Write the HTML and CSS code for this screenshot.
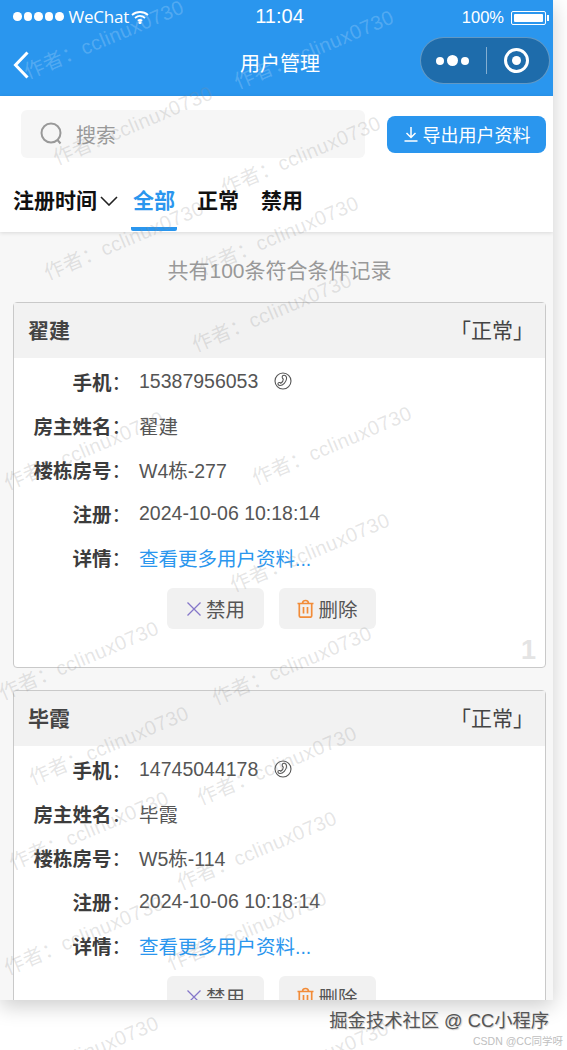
FILE: index.html
```html
<!DOCTYPE html>
<html lang="zh-CN">
<head>
    <meta charset="UTF-8">
    <meta name="viewport" content="width=device-width, initial-scale=1.0">
    <title>用户管理</title>
    <link rel="stylesheet" href="styles.css">
</head>
<body>
    <div class="phone">
        <header class="top">
            <div class="status">
                <div class="status-left">
                    <span class="signal"><i></i><i></i><i></i><i></i><i></i></span>
                    <span class="carrier">WeChat</span>
                    <svg class="wifi" width="18" height="14" viewBox="0 0 18 14" fill="none" stroke="#fff" stroke-width="1.8">
                        <path d="M1 5c4.500-4 11.500-4 16 0"/>
                        <path d="M4 8c3-2.500 7-2.500 10 0"/>
                        <path d="M6.800 10.800c1.300-1 3.100-1 4.400 0"/>
                        <circle cx="9" cy="12.500" r=".7" fill="#fff"/>
                    </svg>
                </div>
                <div class="status-time">11:04</div>
                <div class="status-right">
                    <span>100%</span>
                    <span class="battery"><b></b></span>
                </div>
            </div>
            <div class="nav">
                <svg class="back" width="16" height="28" viewBox="0 0 16 28" fill="none" stroke="#fff" stroke-width="3">
                    <path d="M14.500 1.500 2.500 14l12 12.500"/>
                </svg>
                <div class="nav-title">用户管理</div>
                <div class="capsule">
                    <span class="capsule-dots"><i></i><i class="big"></i><i></i></span>
                    <span class="capsule-line"></span>
                    <span class="capsule-target"><i></i></span>
                </div>
            </div>
        </header>

        <section class="tools">
            <div class="tools-row">
                <div class="search">
                    <svg width="24" height="24" viewBox="0 0 24 24" fill="none" stroke="#999" stroke-width="2">
                        <circle cx="11" cy="11" r="9.500"/>
                        <path d="m17.500 18 3 3.500"/>
                    </svg>
                    <span>搜索</span>
                </div>
                <button type="button" class="export">
                    <svg width="16" height="16" viewBox="0 0 16 16" fill="none" stroke="#fff" stroke-width="1.500">
                        <path d="M8 1v10M3.500 7 8 11.500 12.500 7M1.500 15h13"/>
                    </svg>
                    导出用户资料
                </button>
            </div>
            <div class="tabs">
                <div class="tab-sort">
                    注册时间
                    <svg width="18" height="10" viewBox="0 0 18 10" fill="none" stroke="#222" stroke-width="1.600">
                        <path d="m1 1 8 8 8-8"/>
                    </svg>
                </div>
                <div class="tab tab-on">全部</div>
                <div class="tab">正常</div>
                <div class="tab">禁用</div>
            </div>
        </section>

        <main class="list">
            <p class="count">共有100条符合条件记录</p>

            <article class="card">
                <div class="card-head">
                    <h2>翟建</h2>
                    <span class="state">「正常」</span>
                </div>
                <div class="row"><span class="label">手机<em>：</em></span><span class="value">15387956053</span>
                    <svg class="tel" width="18" height="18" viewBox="0 0 18 18" fill="none" stroke="#555" stroke-width="1.100">
                        <circle cx="9" cy="9" r="8"/>
                        <path d="M9 3.500c2.500-.8 4 1 3.500 3.500-.5 3-3.300 6.500-6.500 6.500-1.600 0-2.600-1.500-1.800-2.500.7-.8 2-.6 2.600.3 1.500-.8 2.500-2.600 2.500-4.300-1 0-1.700-2.800-.3-3.500z"/>
                    </svg>
                </div>
                <div class="row"><span class="label">房主姓名<em>：</em></span><span class="value">翟建</span></div>
                <div class="row"><span class="label">楼栋房号<em>：</em></span><span class="value">W4栋-277</span></div>
                <div class="row"><span class="label">注册<em>：</em></span><span class="value">2024-10-06 10:18:14</span></div>
                <div class="row"><span class="label">详情<em>：</em></span><span class="value link">查看更多用户资料...</span></div>
                <div class="actions">
                    <button type="button" class="act">
                        <svg width="16" height="16" viewBox="0 0 16 16" fill="none" stroke="#8577c9" stroke-width="1.300"><path d="m1.500 1.500 13 13M14.500 1.500l-13 13"/></svg>
                        禁用
                    </button>
                    <button type="button" class="act">
                        <svg width="17" height="19" viewBox="0 0 17 19" fill="none" stroke="#f28c38" stroke-width="1.700"><path d="M.5 4.500h16M5.500 4.500c0-4 6-4 6 0M2.300 4.500v12.200c0 1 .6 1.500 1.500 1.500h9.400c.9 0 1.500-.5 1.500-1.500V4.500M6.500 8v6.500M10.500 8v6.500"/></svg>
                        删除
                    </button>
                </div>
                <span class="num">1</span>
            </article>

            <article class="card">
                <div class="card-head">
                    <h2>毕霞</h2>
                    <span class="state">「正常」</span>
                </div>
                <div class="row"><span class="label">手机<em>：</em></span><span class="value">14745044178</span>
                    <svg class="tel" width="18" height="18" viewBox="0 0 18 18" fill="none" stroke="#555" stroke-width="1.100">
                        <circle cx="9" cy="9" r="8"/>
                        <path d="M9 3.500c2.500-.8 4 1 3.500 3.500-.5 3-3.300 6.500-6.500 6.500-1.600 0-2.600-1.500-1.800-2.500.7-.8 2-.6 2.600.3 1.500-.8 2.500-2.600 2.500-4.300-1 0-1.700-2.800-.3-3.500z"/>
                    </svg>
                </div>
                <div class="row"><span class="label">房主姓名<em>：</em></span><span class="value">毕霞</span></div>
                <div class="row"><span class="label">楼栋房号<em>：</em></span><span class="value">W5栋-114</span></div>
                <div class="row"><span class="label">注册<em>：</em></span><span class="value">2024-10-06 10:18:14</span></div>
                <div class="row"><span class="label">详情<em>：</em></span><span class="value link">查看更多用户资料...</span></div>
                <div class="actions">
                    <button type="button" class="act">
                        <svg width="16" height="16" viewBox="0 0 16 16" fill="none" stroke="#8577c9" stroke-width="1.300"><path d="m1.500 1.500 13 13M14.500 1.500l-13 13"/></svg>
                        禁用
                    </button>
                    <button type="button" class="act">
                        <svg width="17" height="19" viewBox="0 0 17 19" fill="none" stroke="#f28c38" stroke-width="1.700"><path d="M.5 4.500h16M5.500 4.500c0-4 6-4 6 0M2.300 4.500v12.200c0 1 .6 1.500 1.500 1.500h9.400c.9 0 1.500-.5 1.500-1.500V4.500M6.500 8v6.500M10.500 8v6.500"/></svg>
                        删除
                    </button>
                </div>
            </article>
        </main>
    </div>

    <footer class="credit">
        <div class="credit-main">掘金技术社区 @ CC小程序</div>
        <div class="credit-small">CSDN @CC同学呀</div>
    </footer>

    <!-- 水印 -->
    <div class="marks" aria-hidden="true">
        <span class="wm wm1">作者：cclinux0730</span>
        <span class="wm wm2">作者：cclinux0730</span>
        <span class="wm wm3">作者：cclinux0730</span>
        <span class="wm wm4">作者：cclinux0730</span>
        <span class="wm wm5">作者：cclinux0730</span>
        <span class="wm wm6">作者：cclinux0730</span>
        <span class="wm wm7">作者：cclinux0730</span>
        <span class="wm wm8">作者：cclinux0730</span>
        <span class="wm wm9">作者：cclinux0730</span>
        <span class="wm wm10">作者：cclinux0730</span>
        <span class="wm wm11">作者：cclinux0730</span>
        <span class="wm wm12">作者：cclinux0730</span>
        <span class="wm wm13">作者：cclinux0730</span>
        <span class="wm wm14">作者：cclinux0730</span>
        <span class="wm wm15">作者：cclinux0730</span>
        <span class="wm wm16">作者：cclinux0730</span>
        <span class="wm wm17">作者：cclinux0730</span>
        <span class="wm wm18">作者：cclinux0730</span>
        <span class="wm wm19">作者：cclinux0730</span>
        <span class="wm wm20">作者：cclinux0730</span>
    </div>
</body>
</html>
```
FILE: styles.css
```css
* {
    box-sizing: border-box;
    font-family: "Liberation Sans", "Noto Sans CJK SC", sans-serif;
}

html, body {
    margin: 0;
    height: 1050px;
    overflow: hidden;
    background-color: #fff;
}

body {
    position: relative;
}

button {
    border: 0;
    padding: 0;
    color: inherit;
}

.phone {
    width: 553px;
    height: 1000px;
    overflow: hidden;
    background-color: #f7f7f7;
    box-shadow: 0 6px 20px rgba(0, 0, 0, .2);
}

/* 顶部 */
.top {
    height: 96px;
    background-color: #2a96ee;
    color: #fff;
}

.status {
    display: flex;
    align-items: center;
    height: 33px;
    padding: 0 7px 0 13px;
}

.status-left, .status-right {
    flex: 1;
    display: flex;
    align-items: center;
}

.status-left {
    gap: 5px;
}

.status-right {
    justify-content: flex-end;
    gap: 7px;
    font-size: 16.500px;
    padding-top: 2px;
}

.status-time {
    font-size: 20px;
}

.signal {
    display: flex;
    gap: 2px;
}

.signal i {
    width: 8.500px;
    height: 8.500px;
    border-radius: 50%;
    background-color: #fff;
}

.carrier {
    font-family: "Open Sans", sans-serif;
    font-size: 17px;
    letter-spacing: -.2px;
}

.wifi {
    margin-left: -3px;
}

.battery {
    position: relative;
    width: 35px;
    height: 14px;
    padding: 2px;
    border: 1px solid #fff;
    border-radius: 2px;
}

.battery b {
    display: block;
    height: 100%;
    background-color: #fff;
    border-radius: 1px;
}

.battery::after {
    content: "";
    position: absolute;
    right: -4px;
    top: 3px;
    width: 2px;
    height: 6px;
    background-color: #fff;
}

.nav {
    position: relative;
    display: flex;
    align-items: center;
    justify-content: space-between;
    height: 63px;
    padding: 0 3px 12px 13px;
}

.nav-title {
    position: absolute;
    left: 0;
    width: 560px;
    top: 18px;
    text-align: center;
    font-size: 20px;
    line-height: 26px;
}

.back {
    margin-top: 13px;
}

.capsule {
    display: flex;
    align-items: center;
    justify-content: space-between;
    width: 130px;
    height: 47px;
    margin-top: 4px;
    padding: 0 20px 0 15px;
    background-color: #1e6cab;
    border: 1px solid rgba(255, 255, 255, .3);
    border-radius: 24px;
}

.capsule-dots {
    display: flex;
    align-items: center;
    gap: 3px;
}

.capsule-dots i {
    width: 8px;
    height: 8px;
    border-radius: 50%;
    background-color: #fff;
}

.capsule-dots .big {
    width: 11px;
    height: 11px;
}

.capsule-line {
    width: 1px;
    height: 27px;
    background-color: rgba(255, 255, 255, .45);
}

.capsule-target {
    display: flex;
    align-items: center;
    justify-content: center;
    width: 25px;
    height: 25px;
    border: 3px solid #fff;
    border-radius: 50%;
}

.capsule-target i {
    width: 9px;
    height: 9px;
    border-radius: 50%;
    background-color: #fff;
}

/* 搜索和标签 */
.tools {
    position: relative;
    height: 136px;
    background-color: #fff;
    box-shadow: 0 1px 4px rgba(0, 0, 0, .12);
}

.tools-row {
    display: flex;
    align-items: center;
    padding: 14px 7px 0 21px;
}

.search {
    display: flex;
    align-items: center;
    gap: 12px;
    width: 344px;
    height: 48px;
    padding-left: 19px;
    background-color: #f6f6f6;
    border-radius: 6px;
    color: #999;
    font-size: 20px;
}

.export {
    display: flex;
    align-items: center;
    justify-content: center;
    gap: 4px;
    width: 159px;
    height: 37px;
    margin-left: 22px;
    background-color: #2a96ee;
    border-radius: 8px;
    color: #fff;
    font-size: 18px;
}

.tabs {
    display: flex;
    align-items: flex-start;
    margin-top: 26px;
    padding-left: 13px;
    font-size: 21px;
    font-weight: bold;
    line-height: 34px;
    color: #111;
}

.tab-sort {
    display: flex;
    align-items: center;
    gap: 3px;
    width: 118px;
}

.tab {
    height: 47px;
    width: 46px;
    margin-right: 18px;
    text-align: center;
}

.tab-on {
    color: #2a96ee;
    border-bottom: 4px solid #2a96ee;
    border-radius: 0 0 2px 2px;
}

/* 列表 */
.list {
    padding: 0 7px 0 13px;
}

.count {
    margin: 0;
    padding-top: 25px;
    height: 70px;
    text-align: center;
    font-size: 21px;
    line-height: 28px;
    color: #999;
}

.card {
    position: relative;
    height: 366px;
    margin-bottom: 22px;
    background-color: #fff;
    border: 1px solid #c9c9c9;
    border-radius: 4px;
}

.card-head {
    display: flex;
    align-items: center;
    justify-content: space-between;
    height: 55px;
    padding: 0 11px 3px 14px;
    margin-bottom: 1px;
    background-color: #f2f2f2;
    color: #444;
    font-size: 21px;
}

.card-head h2 {
    margin: 0;
    font-size: 21px;
}

.row {
    display: flex;
    align-items: center;
    height: 44px;
    font-size: 19.500px;
    color: #555;
}

.label {
    width: 117px;
    margin-right: 8px;
    text-align: right;
    font-weight: bold;
    color: #3c3c3c;
}

.label em {
    font-style: normal;
    font-weight: normal;
}

.link {
    color: #2a96ee;
}

.tel {
    margin-left: 16px;
}

.actions {
    display: flex;
    gap: 15px;
    margin-top: 9px;
    padding-left: 153px;
}

.act {
    display: flex;
    align-items: center;
    justify-content: center;
    gap: 4px;
    width: 97px;
    height: 41px;
    background-color: #f1f1f1;
    border-radius: 6px;
    color: #555;
    font-size: 19.500px;
}

.num {
    position: absolute;
    right: 9px;
    bottom: 1px;
    font-size: 27px;
    font-weight: bold;
    color: #e4e4e4;
}

/* 底部署名 */
.credit {
    height: 50px;
    padding: 9px 4px 0 0;
    text-align: right;
}

.credit-main {
    padding-right: 14px;
    font-size: 18.300px;
    line-height: 24px;
    color: #555;
    text-shadow: 1px 1px 1px #ccc;
}

.credit-small {
    font-size: 10.500px;
    line-height: 14px;
    margin-top: 1px;
    color: #c0c0c0;
}

/* 水印 */
.marks {
    position: absolute;
    inset: 0;
    overflow: hidden;
    pointer-events: none;
}

.wm {
    position: absolute;
    font-size: 20px;
    line-height: 20px;
    letter-spacing: .4px;
    white-space: nowrap;
    color: rgba(140, 140, 140, .22);
    transform: rotate(-23deg);
    transform-origin: left bottom;
}

.wm1, .wm2 {
    color: rgba(255, 255, 255, .2);
}

.wm1 { left: 29px; top: 62px; }
.wm2 { left: 239px; top: 72px; }
.wm3 { left: 58px; top: 148px; }
.wm4 { left: 226px; top: 178px; }
.wm5 { left: 49px; top: 263px; }
.wm6 { left: 204px; top: 258px; }
.wm7 { left: 197px; top: 335px; }
.wm8 { left: 9px; top: 473px; }
.wm9 { left: 257px; top: 468px; }
.wm10 { left: 235px; top: 575px; }
.wm11 { left: 4px; top: 683px; }
.wm12 { left: 217px; top: 688px; }
.wm13 { left: 34px; top: 768px; }
.wm14 { left: 202px; top: 788px; }
.wm15 { left: 14px; top: 853px; }
.wm16 { left: 182px; top: 873px; }
.wm17 { left: 172px; top: 953px; }
.wm18 { left: 9px; top: 958px; }
.wm19 { left: 4px; top: 1078px; }
.wm20 { left: 234px; top: 1083px; }
```
